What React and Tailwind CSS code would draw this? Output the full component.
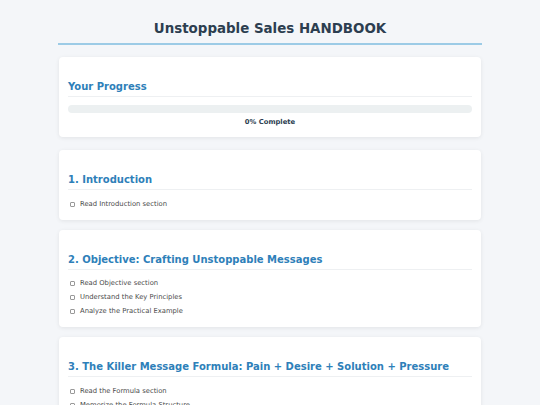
import React, { useState } from 'react';

const sections = [
  {
    id: 'intro',
    title: '1. Introduction',
    tasks: ['Read Introduction section'],
  },
  {
    id: 'objective',
    title: '2. Objective: Crafting Unstoppable Messages',
    tasks: ['Read Objective section', 'Understand the Key Principles', 'Analyze the Practical Example'],
  },
  {
    id: 'formula',
    title: '3. The Killer Message Formula: Pain + Desire + Solution + Pressure',
    tasks: ['Read the Formula section', 'Memorize the Formula Structure', 'Review each Formula Component'],
  },
];

function Card({ title, children }) {
  return (
    <section className="bg-white rounded-[4px] shadow-[0_1px_4px_rgba(0,0,0,0.08)] px-[9px] pt-[9px] pb-[8.5px]">
      <h2 className="mt-[13px] text-[10px] leading-[15px] font-bold text-[#2e80b9] pb-[2px] border-b border-[#eef0f2]">
        {title}
      </h2>
      {children}
    </section>
  );
}

function Task({ label, done, onToggle }) {
  return (
    <label className="flex items-center h-[14px] cursor-pointer" onClick={onToggle}>
      <span
        className={`ml-[2px] w-[5px] h-[5px] border border-[#999] rounded-[1px] ${done ? 'bg-[#2e80b9]' : 'bg-white'}`}
      />
      <span className="ml-[5px] text-[6.8px] text-[#4a4a4a]">{label}</span>
    </label>
  );
}

export default function App() {
  const [done, setDone] = useState({});

  const total = sections.reduce((n, s) => n + s.tasks.length, 0);
  const completed = Object.values(done).filter(Boolean).length;
  const pct = Math.round((completed / total) * 100);

  const toggle = (key) => setDone((d) => ({ ...d, [key]: !d[key] }));

  return (
    <div className="min-h-screen bg-[#f4f6f9] font-['DejaVu_Sans',sans-serif] pt-[19px]">
      <div className="w-[424px] mx-auto">
        {/* Header */}
        <h1 className="text-center text-[13.4px] leading-[20px] font-bold text-[#2c3e50] pb-[4px] border-b-2 border-[#9ccbe6]">
          Unstoppable Sales HANDBOOK
        </h1>

        <div className="mt-[12px] px-[1px] flex flex-col gap-[10px]">
          {/* Progress */}
          <div className="mb-[3.5px]">
            <Card title="Your Progress">
              <div className="mt-[8px] h-[8px] rounded-full bg-[#ecf0f1] overflow-hidden">
                <div className="h-full bg-[#2e80b9]" style={{ width: `${pct}%` }} />
              </div>
              <p className="mt-[4px] text-center text-[6.8px] leading-[11px] font-bold text-[#2c3e50]">
                {pct}% Complete
              </p>
            </Card>
          </div>

          {sections.map((s) => (
            <Card key={s.id} title={s.title}>
              <div className="mt-[7px]">
                {s.tasks.map((t, i) => (
                  <Task key={t} label={t} done={!!done[`${s.id}-${i}`]} onToggle={() => toggle(`${s.id}-${i}`)} />
                ))}
              </div>
            </Card>
          ))}
        </div>
      </div>
    </div>
  );
}
